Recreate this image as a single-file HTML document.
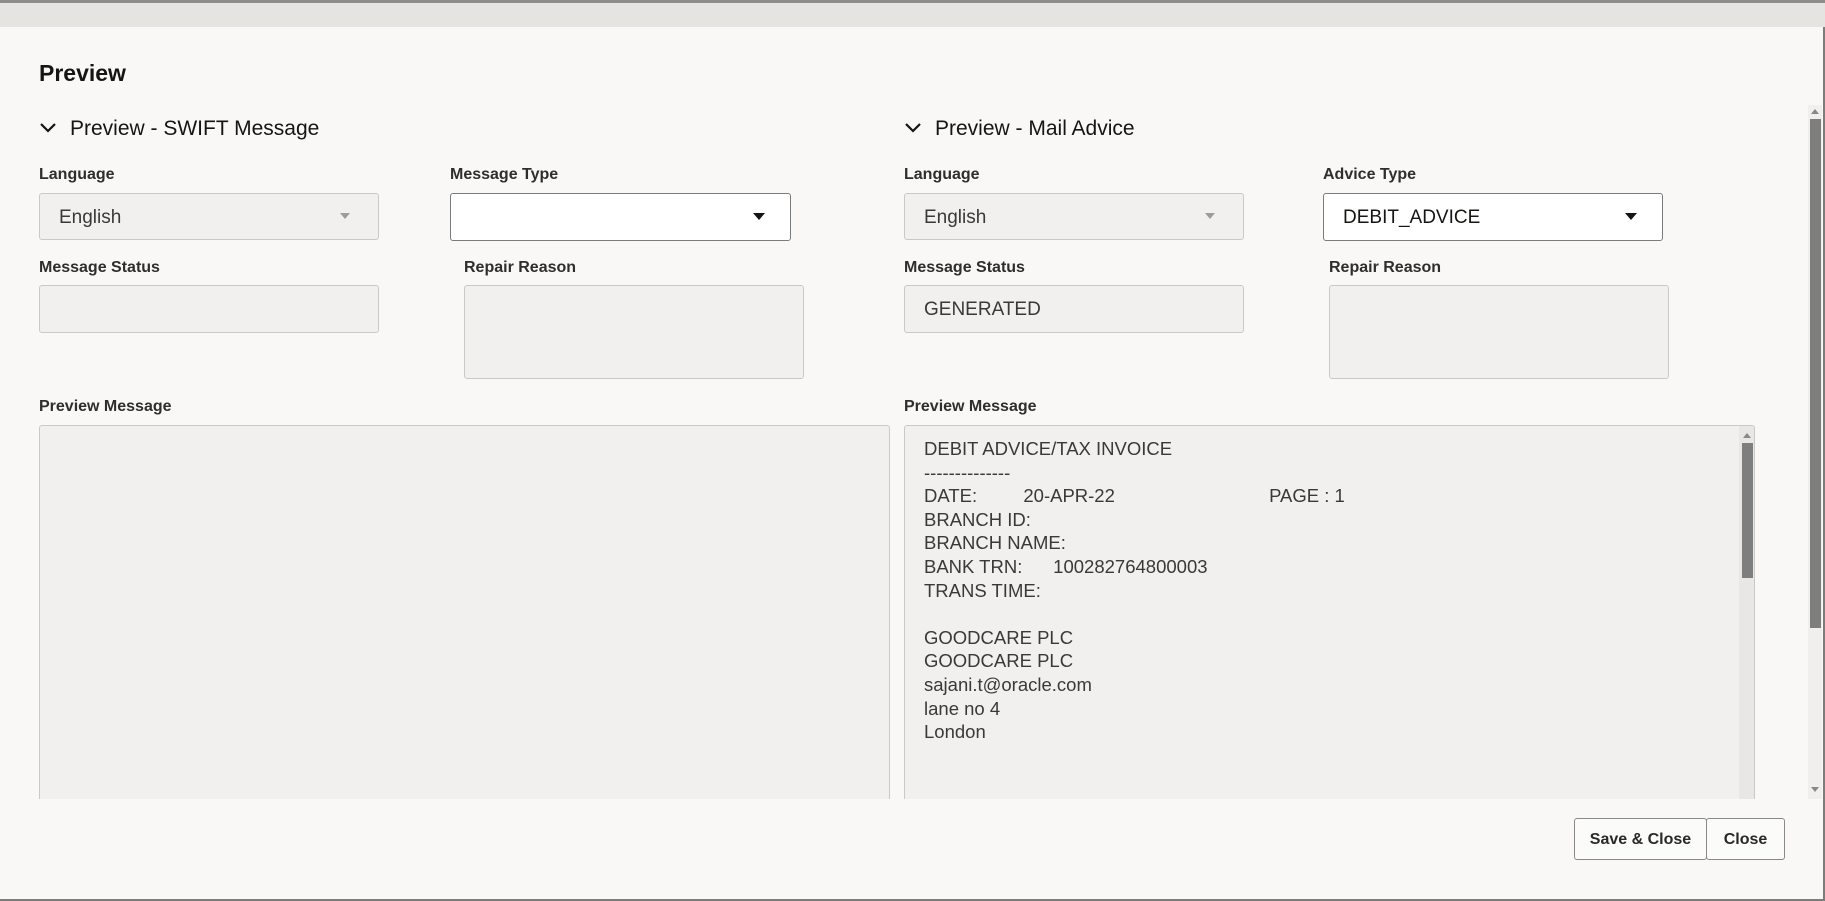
<!DOCTYPE html>
<html><head><meta charset="utf-8"><style>
*{box-sizing:border-box;margin:0;padding:0}
body{width:1825px;height:901px;overflow:hidden;background:#f9f8f6;font-family:"Liberation Sans",sans-serif;color:#161513;position:relative}
.abs{position:absolute}
.top{left:0;top:0;width:1825px;height:27px;background:#e6e4e1;border-top:3px solid #8f8d8b}
.modal{left:0;top:27px;width:1825px;height:874px;background:#f9f8f6;border-right:2px solid #7d7c7a;border-bottom:2px solid #7d7c7a}
.h1{left:39px;top:60px;font-size:23px;font-weight:bold}
.sec{font-size:21px;top:117px}
.lbl{font-size:16px;font-weight:bold;color:#2f2e2c}
.box{background:#f1f0ee;border:1px solid #cbc9c6;border-radius:3px}
.sel{background:#fff;border:1px solid #7c7b79;border-radius:3px}
.val{font-size:19px;color:#3a3937;position:absolute;left:19px;top:13px}
.tri{position:absolute;width:0;height:0;border-left:6px solid transparent;border-right:6px solid transparent;border-top:7px solid #161513}
.tri.g{border-left:5px solid transparent;border-right:5px solid transparent;border-top:6px solid #9e9c99}
.msg{font-size:18.5px;color:#3a3937;line-height:23.6px;white-space:pre}
.btn{border:1px solid #8a8987;border-radius:3px;background:#fbfbfa;font-size:16px;font-weight:bold;text-align:center;line-height:42px;height:42px;top:818px;color:#2a2927}
</style></head><body>
<div class="abs top"></div>
<div class="abs modal"></div>
<div class="abs h1">Preview</div>

<svg class="abs" style="left:39px;top:122px" width="18" height="12"><path d="M2 2 L9 9 L16 2" stroke="#161513" stroke-width="2.2" fill="none"/></svg>
<div class="abs sec" style="left:70px">Preview - SWIFT Message</div>
<svg class="abs" style="left:904px;top:122px" width="18" height="12"><path d="M2 2 L9 9 L16 2" stroke="#161513" stroke-width="2.2" fill="none"/></svg>
<div class="abs sec" style="left:935px">Preview - Mail Advice</div>

<div class="abs lbl" style="left:39px;top:166px">Language</div>
<div class="abs box" style="left:39px;top:193px;width:340px;height:47px"><span class="val">English</span><span class="tri g" style="left:300px;top:19px"></span></div>
<div class="abs lbl" style="left:450px;top:166px">Message Type</div>
<div class="abs sel" style="left:450px;top:193px;width:341px;height:48px"><span class="tri" style="left:302px;top:19px"></span></div>

<div class="abs lbl" style="left:39px;top:259px">Message Status</div>
<div class="abs box" style="left:39px;top:285px;width:340px;height:48px"></div>
<div class="abs lbl" style="left:464px;top:259px">Repair Reason</div>
<div class="abs box" style="left:464px;top:285px;width:340px;height:94px"></div>

<div class="abs lbl" style="left:39px;top:398px">Preview Message</div>
<div class="abs box" style="left:39px;top:425px;width:851px;height:400px"></div>

<div class="abs lbl" style="left:904px;top:166px">Language</div>
<div class="abs box" style="left:904px;top:193px;width:340px;height:47px"><span class="val">English</span><span class="tri g" style="left:300px;top:19px"></span></div>
<div class="abs lbl" style="left:1323px;top:166px">Advice Type</div>
<div class="abs sel" style="left:1323px;top:193px;width:340px;height:48px"><span class="val" style="color:#161513">DEBIT_ADVICE</span><span class="tri" style="left:301px;top:19px"></span></div>

<div class="abs lbl" style="left:904px;top:259px">Message Status</div>
<div class="abs box" style="left:904px;top:285px;width:340px;height:48px"><span class="val">GENERATED</span></div>
<div class="abs lbl" style="left:1329px;top:259px">Repair Reason</div>
<div class="abs box" style="left:1329px;top:285px;width:340px;height:94px"></div>

<div class="abs lbl" style="left:904px;top:398px">Preview Message</div>
<div class="abs box" style="left:904px;top:425px;width:851px;height:400px;overflow:hidden">
<div class="msg abs" style="left:19px;top:11px">DEBIT ADVICE/TAX INVOICE
--------------
DATE:         20-APR-22                              PAGE : 1
BRANCH ID:
BRANCH NAME:
BANK TRN:      100282764800003
TRANS TIME:

GOODCARE PLC
GOODCARE PLC
sajani.t@oracle.com
lane no 4
London</div>
<div class="abs" style="left:834px;top:0;width:16px;height:400px;background:#e8e7e5"></div>
<div class="abs" style="left:838px;top:7px;width:0;height:0;border-left:4px solid transparent;border-right:4px solid transparent;border-bottom:5px solid #888"></div>
<div class="abs" style="left:837px;top:17px;width:11px;height:135px;background:#7e7e7e"></div>
</div>

<div class="abs" style="left:0;top:799px;width:1822px;height:100px;background:#f9f8f6"></div>
<div class="abs" style="left:1808px;top:105px;width:14px;height:694px;background:#f0efed"></div>
<div class="abs" style="left:1811px;top:109px;width:0;height:0;border-left:4px solid transparent;border-right:4px solid transparent;border-bottom:5px solid #888"></div>
<div class="abs" style="left:1810px;top:119px;width:11px;height:509px;background:#7e7e7e"></div>
<div class="abs" style="left:1811px;top:787px;width:0;height:0;border-left:4px solid transparent;border-right:4px solid transparent;border-top:5px solid #888"></div>

<div class="abs btn" style="left:1574px;width:133px">Save &amp; Close</div>
<div class="abs btn" style="left:1706px;width:79px">Close</div>
</body></html>
